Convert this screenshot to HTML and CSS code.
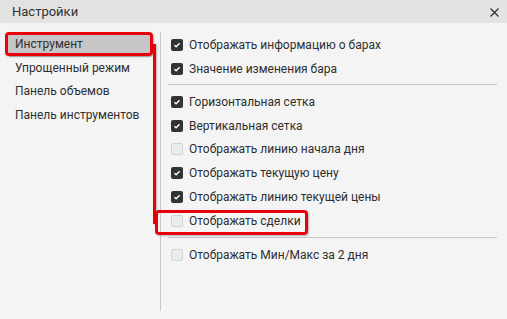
FILE: index.html
```html
<!DOCTYPE html>
<html lang="ru">
<head>
<meta charset="utf-8">
<title>Настройки</title>
<link rel="stylesheet" href="styles.css">
</head>
<body>
<div class="dialog">
  <div class="header">
    <span class="title">Настройки</span>
    <svg class="close" width="9" height="9" viewBox="0 0 9 9"><path d="M0.5 0.5L8.5 8.5M8.5 0.5L0.5 8.5" stroke="#333" stroke-width="1.3"/></svg>
  </div>
  <div class="body">
    <div class="sidebar">
      <div class="nav-item selected">Инструмент</div>
      <div class="nav-item">Упрощенный режим</div>
      <div class="nav-item">Панель объемов</div>
      <div class="nav-item">Панель инструментов</div>
    </div>
    <div class="content">
      <div class="row"><span class="cb checked"><svg width="12" height="12" viewBox="0 0 12 12"><path d="M3.4 6.2L5.1 7.8L8.6 4.2" fill="none" stroke="#fff" stroke-width="1.4"/></svg></span>Отображать информацию о барах</div>
      <div class="row"><span class="cb checked"><svg width="12" height="12" viewBox="0 0 12 12"><path d="M3.4 6.2L5.1 7.8L8.6 4.2" fill="none" stroke="#fff" stroke-width="1.4"/></svg></span>Значение изменения бара</div>
      <div class="sep sep1"></div>
      <div class="row"><span class="cb checked"><svg width="12" height="12" viewBox="0 0 12 12"><path d="M3.4 6.2L5.1 7.8L8.6 4.2" fill="none" stroke="#fff" stroke-width="1.4"/></svg></span>Горизонтальная сетка</div>
      <div class="row"><span class="cb checked"><svg width="12" height="12" viewBox="0 0 12 12"><path d="M3.4 6.2L5.1 7.8L8.6 4.2" fill="none" stroke="#fff" stroke-width="1.4"/></svg></span>Вертикальная сетка</div>
      <div class="row"><span class="cb"></span>Отображать линию начала дня</div>
      <div class="row"><span class="cb checked"><svg width="12" height="12" viewBox="0 0 12 12"><path d="M3.4 6.2L5.1 7.8L8.6 4.2" fill="none" stroke="#fff" stroke-width="1.4"/></svg></span>Отображать текущую цену</div>
      <div class="row"><span class="cb checked"><svg width="12" height="12" viewBox="0 0 12 12"><path d="M3.4 6.2L5.1 7.8L8.6 4.2" fill="none" stroke="#fff" stroke-width="1.4"/></svg></span>Отображать линию текущей цены</div>
      <div class="row"><span class="cb"></span>Отображать сделки</div>
      <div class="sep sep2"></div>
      <div class="row"><span class="cb"></span>Отображать Мин/Макс за 2 дня</div>
    </div>
  </div>
  <div class="mark mark-box1"></div>
  <div class="mark mark-line"></div>
  <div class="mark mark-box2"></div>
</div>
</body>
</html>
```

FILE: styles.css
```css
* { box-sizing: border-box; }
html, body {
  margin: 0;
  padding: 0;
  background: #f4f4f4;
}
body {
  font-family: Roboto, "Liberation Sans", sans-serif;
  font-size: 12px;
  color: #2e2e2e;
}
.dialog {
  position: relative;
  width: 507px;
  height: 319px;
  background: #f4f4f4;
}
.header {
  height: 23px;
  background: #e3e3e3;
  display: flex;
  align-items: center;
  justify-content: space-between;
  padding: 0 8px 0 12px;
}
.title {
  font-size: 13px;
  color: #333;
}
.close { display: block; margin-top: 1px; }
.body {
  display: flex;
  padding: 9px 0 8px 0;
  height: 296px;
}
.sidebar {
  width: 161px;
  border-right: 1px solid #c8c8c8;
  padding: 1px 9px 0 8px;
}
.nav-item {
  height: 23.67px;
  line-height: 22px;
  padding-left: 7px;
  border-radius: 2px;
  white-space: nowrap;
}
.nav-item.selected {
  background: #c6c6c6;
}
.content {
  flex: 1;
  padding: 1px 10px 0 7px;
}
.row {
  height: 23.8px;
  display: flex;
  align-items: center;
  padding-left: 3px;
  white-space: nowrap;
}
.cb {
  width: 12px;
  height: 12px;
  border-radius: 2px;
  margin-right: 6px;
  flex: none;
  background: #ebebeb;
  border: 1px solid #d3d3d3;
  display: flex;
}
.cb.checked {
  background: #333;
  border: none;
}
.sep {
  height: 1px;
  background: #c8c8c8;
}
.sep1 { margin: 3.4px 0 5px 0; }
.sep2 { margin: 4.5px 0 5px 0; }
.mark {
  position: absolute;
  border: 3px solid #e8000a;
  border-radius: 4px;
  box-shadow: 1px 1px 2px rgba(0,0,0,0.25);
}
.mark-box1 { left: 5px; top: 32px; width: 148px; height: 24px; }
.mark-line { left: 153px; top: 44px; width: 3px; height: 180px; border: none; border-radius: 0; background: #e8000a; }
.mark-box2 { left: 155px; top: 210px; width: 153px; height: 25px; }
```
